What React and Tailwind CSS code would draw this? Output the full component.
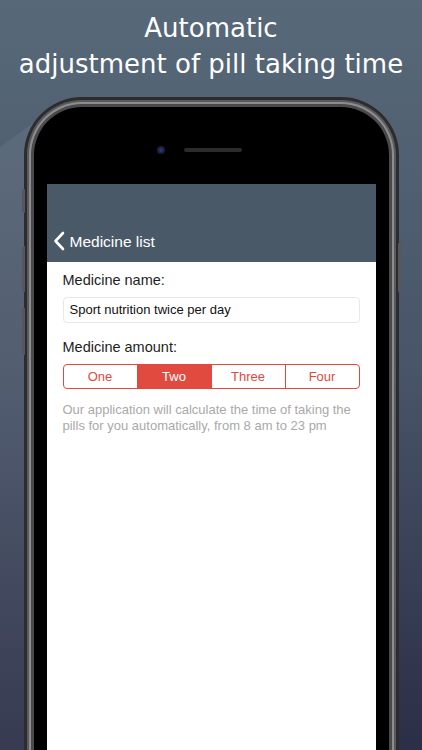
import React from "react";

/* ---------- Pieces ---------- */

const BackChevron = () => (
  <svg width="12" height="20" viewBox="0 0 12 20" fill="none">
    <path
      d="M10 2 L2.5 10 L10 18"
      stroke="white"
      strokeWidth="2.6"
      strokeLinecap="round"
      strokeLinejoin="round"
    />
  </svg>
);

const amounts = ["One", "Two", "Three", "Four"];

const Segmented = ({ selected }) => (
  <div className="flex h-[25px] border border-[#e0493e] rounded-[4px] overflow-hidden">
    {amounts.map((label, i) => (
      <div
        key={label}
        className={
          "flex-1 flex items-center justify-center text-[13px] " +
          (i > 0 ? "border-l border-[#e0493e] " : "") +
          (label === selected ? "bg-[#e14b3f] text-white" : "text-[#e0493e]")
        }
      >
        {label}
      </div>
    ))}
  </div>
);

/* ---------- Screen ---------- */

const Screen = () => (
  <div className="bg-white h-full" style={{ fontFamily: '"Liberation Sans", Arial, sans-serif' }}>
    {/* Nav bar */}
    <div className="bg-[#4a5968] h-[78px] flex items-end pb-[9px] pl-[6px]">
      <div className="flex items-center gap-[5px] text-white text-[15.5px]">
        <BackChevron />
        <span>Medicine list</span>
      </div>
    </div>

    {/* Form */}
    <div className="px-[16px] pt-[8px]">
      <div className="text-[14.5px] leading-[20px] text-[#1e1e1e]">Medicine name:</div>
      <div className="mt-[7px] h-[26px] border border-[#e8e8e8] rounded-[4px] flex items-center px-[6px] text-[13px] text-[#111]">
        Sport nutrition twice per day
      </div>

      <div className="mt-[14px] text-[14.5px] leading-[20px] text-[#1e1e1e]">Medicine amount:</div>
      <div className="mt-[7px]">
        <Segmented selected="Two" />
      </div>

      <p className="mt-[13px] text-[13px] leading-[15.5px] text-[#a9a9a9]">
        Our application will calculate the time of taking the pills for you automatically, from 8 am to 23 pm
      </p>
    </div>
  </div>
);

/* ---------- Phone ---------- */

const Phone = () => (
  <div className="relative mx-auto w-[375px]">
    {/* side buttons */}
    <div className="absolute -left-[2px] top-[92px] w-[3px] h-[24px] bg-[#55575c] rounded-l-sm" />
    <div className="absolute -left-[2px] top-[149px] w-[3px] h-[46px] bg-[#55575c] rounded-l-sm" />
    <div className="absolute -left-[2px] top-[211px] w-[3px] h-[47px] bg-[#55575c] rounded-l-sm" />
    <div className="absolute -right-[2px] top-[146px] w-[3px] h-[49px] bg-[#55575c] rounded-r-sm" />

    <div className="rounded-[58px] bg-[#2c2c2e] p-[3px]">
      <div className="rounded-[55px] bg-[#5a5a5d] p-[2px]">
        <div className="rounded-[53px] bg-[#8d8d90] p-[2px]">
          <div className="rounded-[51px] bg-[#4a4a4c] p-[3px]">
            <div className="rounded-[48px] bg-black px-[13px] pt-[77px] h-[720px] relative">
              {/* camera + speaker */}
              <div className="absolute top-[39px] left-0 right-0 flex items-center">
                <div className="ml-[123px] w-[8px] h-[8px] rounded-full bg-[#1b1f3a] flex items-center justify-center">
                  <div className="w-[4px] h-[4px] rounded-full bg-[#2a3470]" />
                </div>
                <div className="ml-[19px] w-[58px] h-[4px] rounded-full bg-[#2b2b2d]" />
              </div>
              <div className="h-full">
                <Screen />
              </div>
            </div>
          </div>
        </div>
      </div>
    </div>
  </div>
);

/* ---------- Page ---------- */

export default function App() {
  return (
    <div className="relative w-[422px] h-[750px] overflow-hidden bg-gradient-to-b from-[#576979] via-[#485468] to-[#2b2e47]">
      {/* lighter diagonal band */}
      <div
        className="absolute inset-0 bg-white/[0.06]"
        style={{ clipPath: "polygon(0 147px, 50px 111px, 50px 750px, 0 750px)" }}
      />

      <div className="relative">
        <h1
          className="h-[97px] pt-[10px] text-center text-white text-[26px] leading-[36px]"
          style={{ fontFamily: '"DejaVu Sans", Verdana, sans-serif' }}
        >
          Automatic
          <br />
          adjustment of pill taking time
        </h1>
        <Phone />
      </div>
    </div>
  );
}
